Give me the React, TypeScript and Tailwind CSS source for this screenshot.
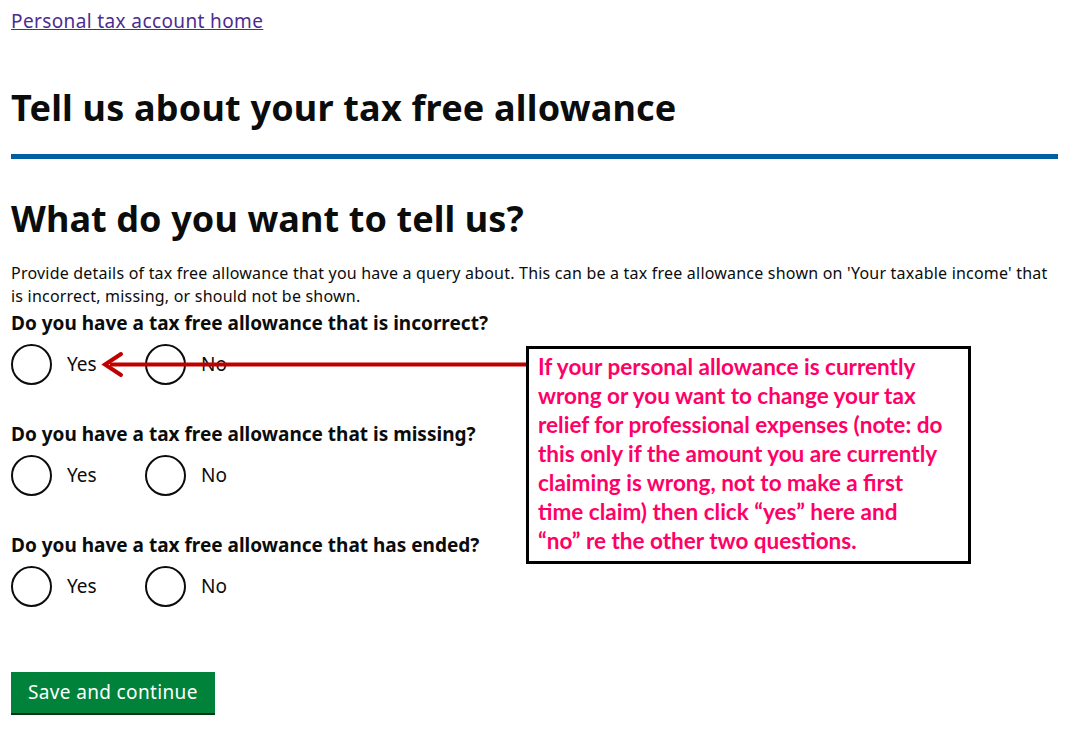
import React from "react";

const gov = { fontFamily: '"Noto Sans", Arial, sans-serif' };
const callout = { fontFamily: 'Lato, "Liberation Sans", sans-serif' };

function Radio({ label }: { label: string }) {
  return (
    <label className="flex items-center">
      <span className="block w-[41px] h-[41px] rounded-full border-2 border-[#0b0c0c] bg-white" />
      <span className="ml-[15px] text-[19px] text-[#0b0c0c] leading-none">{label}</span>
    </label>
  );
}

function Question({ q }: { q: string }) {
  return (
    <div>
      <div className="text-[19px] font-bold text-[#0b0c0c] leading-[25px]">{q}</div>
      <div className="flex mt-[8px]">
        <div className="w-[134px]">
          <Radio label="Yes" />
        </div>
        <Radio label="No" />
      </div>
    </div>
  );
}

export default function App() {
  return (
    <div className="relative w-[1072px] h-[730px] bg-white overflow-hidden" style={gov}>
      <div className="px-[11px] pt-[9px]">
        <a href="#" className="text-[19px] leading-[25px] tracking-[0.38px] text-[#4c2c92] underline">
          Personal tax account home
        </a>
        <h1 className="mt-[51px] text-[36px] font-bold leading-[45px] tracking-[0.2px] text-[#0b0c0c]">
          Tell us about your tax free allowance
        </h1>
        <div className="mt-[24px] h-[5px] w-[1047px] bg-[#005ea5]" />
        <h2 className="mt-[37px] text-[36px] font-bold leading-[45px] tracking-[0.1px] text-[#0b0c0c]">
          What do you want to tell us?
        </h2>
        <p className="mt-[21px] text-[16px] leading-[23px] tracking-[0.21px] text-[#0b0c0c]">
          Provide details of tax free allowance that you have a query about. This can be a tax free allowance shown on 'Your taxable income' that is incorrect, missing, or should not be shown.
        </p>
        <div className="mt-[3px] flex flex-col gap-[37px]">
          <Question q="Do you have a tax free allowance that is incorrect?" />
          <Question q="Do you have a tax free allowance that is missing?" />
          <Question q="Do you have a tax free allowance that has ended?" />
        </div>
        <button className="mt-[65px] h-[41px] px-[17px] bg-[#00823b] text-white text-[19px] tracking-[0.35px] shadow-[0_2px_0_#003618]">
          Save and continue
        </button>
      </div>

      {/* annotation arrow */}
      <svg className="absolute left-0 top-0" width="1072" height="730">
        <line x1="110" y1="364.5" x2="528" y2="364.5" stroke="#c00000" strokeWidth="4" />
        <polyline points="121,354 105,364.5 121,375" fill="none" stroke="#c00000" strokeWidth="4" strokeLinecap="round" strokeLinejoin="miter" />
      </svg>

      {/* annotation callout */}
      <div
        className="absolute left-[526px] top-[346px] w-[445px] h-[218px] border-[3px] border-black bg-white pl-[9px] pt-[3px] text-[22.5px] font-bold leading-[29px] text-[#ff0066]"
        style={callout}
      >
        If your personal allowance is currently
        <br />
        wrong or you want to change your tax
        <br />
        relief for professional expenses (note: do
        <br />
        this only if the amount you are currently
        <br />
        claiming is wrong, not to make a first
        <br />
        time claim) then click “yes” here and
        <br />
        “no” re the other two questions.
      </div>
    </div>
  );
}
